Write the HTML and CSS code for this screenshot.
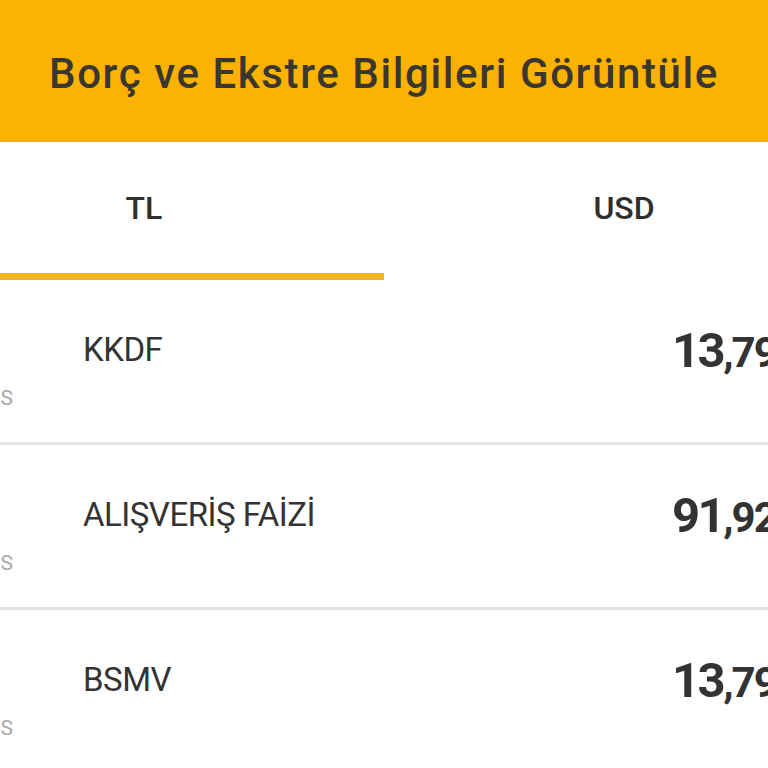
FILE: index.html
```html
<!DOCTYPE html>
<html lang="tr">
<head>
<meta charset="utf-8">
<title>Borç ve Ekstre Bilgileri Görüntüle</title>
<link rel="stylesheet" href="styles.css">
</head>
<body>
<div class="page">
  <header class="header">
    <h1 class="title">Borç ve Ekstre Bilgileri Görüntüle</h1>
  </header>
  <nav class="tabs">
    <div class="tab tab-active"><span class="tab-label">TL</span></div>
    <div class="tab"><span class="tab-label">USD</span></div>
  </nav>
  <div class="list">
    <div class="row">
      <div class="side">İŞLEMLERS</div>
      <div class="label">KKDF</div>
      <div class="amount"><span class="int">13</span><span class="dec">,79</span></div>
    </div>
    <div class="row">
      <div class="side">İŞLEMLERS</div>
      <div class="label">ALIŞVERİŞ FAİZİ</div>
      <div class="amount"><span class="int">91</span><span class="dec">,92</span></div>
    </div>
    <div class="row">
      <div class="side">İŞLEMLERS</div>
      <div class="label">BSMV</div>
      <div class="amount"><span class="int">13</span><span class="dec">,79</span></div>
    </div>
  </div>
</div>
</body>
</html>
```
FILE: styles.css
```css
html, body {
  margin: 0;
  padding: 0;
  background: #ffffff;
  overflow: hidden;
}

body {
  width: 768px;
  height: 768px;
  font-family: Roboto, "Noto Sans", "Liberation Sans", sans-serif;
}

.page {
  width: 960px;
  margin-left: -96px;
}

.header {
  height: 142px;
  background: #fcb200;
  display: flex;
  align-items: center;
  justify-content: center;
}

.title {
  margin: 0;
  font-size: 42px;
  line-height: 42px;
  font-weight: 500;
  letter-spacing: 1.6px;
  color: #3a3630;
  padding-top: 5px;
}

.tabs {
  display: flex;
  height: 138px;
}

.tab {
  flex: 1;
  display: flex;
  align-items: center;
  justify-content: center;
  box-sizing: border-box;
  padding-bottom: 6px;
}

.tab-active {
  border-bottom: 7px solid #f0b31e;
  padding-bottom: 0;
}

.tab-label {
  font-size: 32px;
  font-weight: 500;
  color: #2f2f2f;
}

.row {
  display: grid;
  grid-template-columns: 109px 70px 589px auto;
  height: 162px;
  border-bottom: 3px solid #e3e3e3;
}

.side {
  grid-column: 1;
  text-align: right;
  font-size: 21px;
  line-height: 21px;
  color: #a8a8a8;
  padding-top: 108px;
  overflow: hidden;
  white-space: nowrap;
}

.label {
  grid-column: 3;
  font-size: 33px;
  line-height: 33px;
  letter-spacing: -0.5px;
  color: #333333;
  padding-top: 53px;
  white-space: nowrap;
}

.amount {
  grid-column: 4;
  padding-top: 46px;
  color: #333333;
  font-weight: 700;
  white-space: nowrap;
  line-height: 49px;
}

.int {
  font-size: 49px;
  letter-spacing: -2.5px;
}

.dec {
  font-size: 42px;
  letter-spacing: -2px;
}
```
